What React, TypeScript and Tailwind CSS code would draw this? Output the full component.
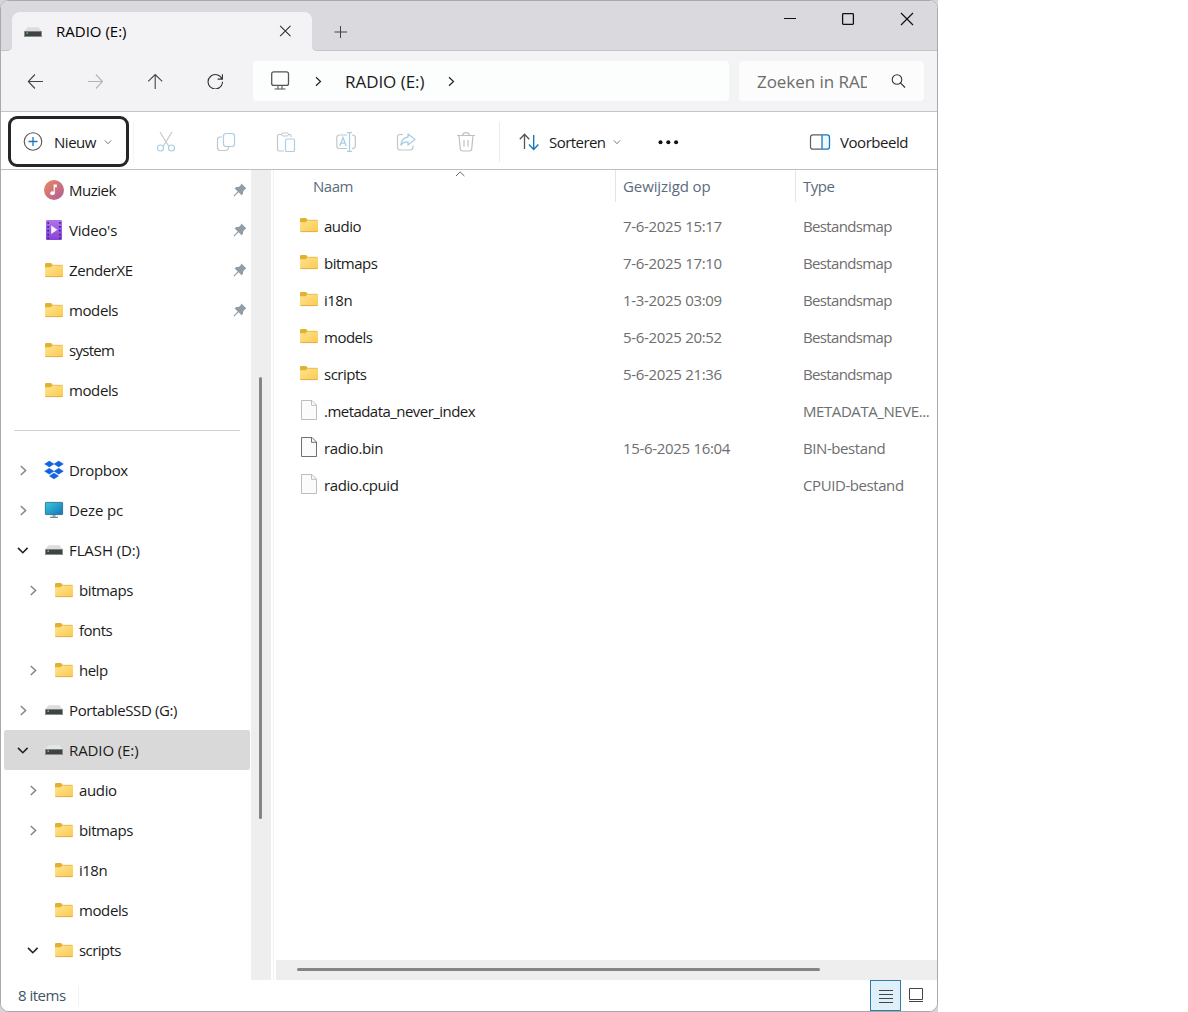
import type { ReactNode } from "react";
import { clsx } from "clsx";

type IconKind = "music" | "video" | "folder" | "dropbox" | "pc" | "drive";

interface TreeItem {
  label: string;
  icon: IconKind;
  level?: number;
  state?: "open" | "closed";
  pinned?: boolean;
  selected?: boolean;
  tracking?: string;
}

interface FileRow {
  name: string;
  kind: "folder" | "file" | "hidden";
  date?: string;
  type: string;
}

const quickAccess: TreeItem[] = [
  { label: "Muziek", icon: "music", pinned: true },
  { label: "Video's", icon: "video", pinned: true, tracking: "tracking-[-0.25px]" },
  { label: "ZenderXE", icon: "folder", pinned: true, tracking: "tracking-[-0.4px]" },
  { label: "models", icon: "folder", pinned: true, tracking: "tracking-[-0.4px]" },
  { label: "system", icon: "folder", tracking: "tracking-[-0.7px]" },
  { label: "models", icon: "folder", tracking: "tracking-[-0.4px]" },
];

const tree: TreeItem[] = [
  { label: "Dropbox", icon: "dropbox", state: "closed", tracking: "tracking-[-0.35px]" },
  { label: "Deze pc", icon: "pc", state: "closed", tracking: "tracking-[-0.15px]" },
  { label: "FLASH (D:)", icon: "drive", state: "open", tracking: "tracking-[-0.1px]" },
  { label: "bitmaps", icon: "folder", level: 1, state: "closed", tracking: "tracking-[-0.4px]" },
  { label: "fonts", icon: "folder", level: 1 },
  { label: "help", icon: "folder", level: 1, state: "closed" },
  { label: "PortableSSD (G:)", icon: "drive", state: "closed", tracking: "tracking-[-0.38px]" },
  { label: "RADIO (E:)", icon: "drive", state: "open", selected: true, tracking: "tracking-[-0.1px]" },
  { label: "audio", icon: "folder", level: 1, state: "closed", tracking: "tracking-[-0.35px]" },
  { label: "bitmaps", icon: "folder", level: 1, state: "closed", tracking: "tracking-[-0.4px]" },
  { label: "i18n", icon: "folder", level: 1 },
  { label: "models", icon: "folder", level: 1, tracking: "tracking-[-0.4px]" },
  { label: "scripts", icon: "folder", level: 1, state: "open", tracking: "tracking-[-0.6px]" },
];

const files: FileRow[] = [
  { name: "audio", kind: "folder", date: "7-6-2025 15:17", type: "Bestandsmap" },
  { name: "bitmaps", kind: "folder", date: "7-6-2025 17:10", type: "Bestandsmap" },
  { name: "i18n", kind: "folder", date: "1-3-2025 03:09", type: "Bestandsmap" },
  { name: "models", kind: "folder", date: "5-6-2025 20:52", type: "Bestandsmap" },
  { name: "scripts", kind: "folder", date: "5-6-2025 21:36", type: "Bestandsmap" },
  { name: ".metadata_never_index", kind: "hidden", type: "METADATA_NEVE..." },
  { name: "radio.bin", kind: "file", date: "15-6-2025 16:04", type: "BIN-bestand" },
  { name: "radio.cpuid", kind: "hidden", type: "CPUID-bestand" },
];

function Svg({ w, h, className, children }: { w: number; h: number; className?: string; children: ReactNode }) {
  return (
    <svg width={w} height={h} viewBox={`0 0 ${w} ${h}`} fill="none" className={clsx("shrink-0", className)}>
      {children}
    </svg>
  );
}

function FolderIcon() {
  return (
    <Svg w={20} h={20}>
      <path d="M1 4.2Q1 3 2.2 3H7l2.2 2.2L7 8H1Z" fill="#e3b130" />
      <path d="M1 7.2H6.6L9 5H18q1 0 1 1V16q0 1-1 1H2q-1 0-1-1Z" fill="url(#folder)" />
      <path d="M1.5 16.6H18.5" stroke="#dfa94a" strokeWidth="0.9" />
      <path d="M9 5.3H18.5" stroke="#e2b64c" strokeWidth="0.8" />
    </Svg>
  );
}

function DriveIcon({ selected }: { selected?: boolean }) {
  return (
    <Svg w={20} h={20}>
      <path d="M4.5 5.2H15.5L19 9.5H1Z" fill={selected ? "#e6e6e6" : "#dcdddd"} />
      <rect x="1" y="9" width="18" height="6" rx="0.5" fill="#8b8d8d" />
      <rect x="2" y="9.8" width="16" height="4.2" fill="#3f4343" />
      <rect x="3.5" y="10.4" width="1.5" height="1.5" fill="#6fd05f" />
    </Svg>
  );
}

function FileIcon({ faded }: { faded: boolean }) {
  const stroke = faded ? "#bdbdbd" : "#6f6f6f";
  return (
    <Svg w={18} h={20}>
      <path d="M1.5.5H12L16.5 5V19.5H1.5Z" fill="#fbfbfb" stroke={stroke} />
      <path d="M11.5.8V5.3H16.3" stroke={stroke} />
    </Svg>
  );
}

function TreeIcon({ kind, selected }: { kind: IconKind; selected?: boolean }) {
  if (kind === "folder") return <FolderIcon />;
  if (kind === "drive") return <DriveIcon selected={selected} />;
  if (kind === "music")
    return (
      <Svg w={20} h={20}>
        <circle cx="10" cy="10" r="10" fill="url(#music)" />
        <ellipse cx="8.4" cy="13.2" rx="2.2" ry="1.9" fill="#fff" />
        <path d="M9.6 4.5h3.2v2.7h-2v6H9.6Z" fill="#fff" />
      </Svg>
    );
  if (kind === "video")
    return (
      <Svg w={20} h={20}>
        <rect x="2" width="16" height="20" rx="1.2" fill="url(#video)" />
        <path d="M4.2 2V19M15.9 2V19" stroke="#4c2389" strokeWidth="1.8" strokeDasharray="1.8 2.1" />
        <path d="M7.2 5.5L13.4 9.8L7.2 14Z" fill="#f5effb" />
      </Svg>
    );
  if (kind === "dropbox")
    return (
      <Svg w={20} h={20}>
        <path
          d="M5.3 1L10 4 5.3 7 .6 4ZM14.7 1L19.4 4 14.7 7 10 4ZM5.3 8.2L10 11.2 5.3 14.2 .6 11.2ZM14.7 8.2L19.4 11.2 14.7 14.2 10 11.2ZM10 13L14.6 16 10 19 5.4 16Z"
          fill="#1263e0"
          stroke="#1263e0"
          strokeWidth="0.4"
        />
      </Svg>
    );
  return (
    <Svg w={20} h={20}>
      <path d="M8.5 14h3v3h-3z" fill="#a9b4ba" />
      <path d="M6 17.3h8" stroke="#586f7b" />
      <rect x="1.4" y="2.4" width="17.2" height="12.2" rx="0.5" fill="url(#pc)" stroke="#20647e" strokeWidth="0.8" />
    </Svg>
  );
}

function PinIcon() {
  return (
    <Svg w={14} h={14}>
      <path
        d="M8.4.6L13.4 5.6 12 6.2 10.2 8.4 9.9 11 8.6 12.3 5.6 9.3 1.2 13.4.5 12.8 4.7 8.4 1.7 5.4 3 4.1 5.8 4 7.8 2Z"
        fill="#929ca4"
      />
    </Svg>
  );
}

function TreeRow({ item }: { item: TreeItem }) {
  return (
    <div
      className={clsx(
        "mr-px ml-[3px] flex h-10 shrink-0 items-center rounded-[2px]",
        item.level ? "pl-[19px]" : "pl-[9px]",
        item.selected && "bg-[#d9d9d9]"
      )}
    >
      <div className="mr-[11px] flex w-5 justify-center">
        {item.state === "closed" && (
          <Svg w={8} h={12}>
            <path d="M1.8 2L6.6 6.5 1.8 11" stroke="#858585" strokeWidth="1.5" />
          </Svg>
        )}
        {item.state === "open" && (
          <Svg w={12} h={8}>
            <path d="M1 1.9L5.8 6.7 10.6 1.9" stroke="#222" strokeWidth="1.6" />
          </Svg>
        )}
      </div>
      <TreeIcon kind={item.icon} selected={item.selected} />
      <span className={clsx("ml-[5px] flex-1 whitespace-pre text-[#1b1b1b]", item.tracking)}>{item.label}</span>
      {item.pinned && (
        <div className="mr-[3px]">
          <PinIcon />
        </div>
      )}
    </div>
  );
}

function TitleBar() {
  return (
    <div className="flex h-[50px] shrink-0 bg-[#f3f3f5]">
      <div className="w-[11px] rounded-br-[5px] border-b border-[#c4c4c9] bg-[#d9d9de]" />
      <div className="flex w-[300px] flex-col bg-linear-to-b from-[#d9d9de] from-80% to-[#f3f3f5] to-80% pt-[11px]">
        <div className="flex flex-1 items-center rounded-t-lg bg-[#f3f3f5] pr-[19px] pl-[11px]">
          <DriveIcon />
          <span className="ml-[13px] flex-1 text-black tracking-[0px]">RADIO (E:)</span>
          <Svg w={16} h={16}>
            <path d="M3.1 1.8L13.5 12.2M13.5 1.8L3.1 12.2" stroke="#333" strokeWidth="1.1" />
          </Svg>
        </div>
      </div>
      <div className="flex flex-1 justify-between rounded-bl-[5px] border-b border-[#c4c4c9] bg-[#d9d9de]">
        <Svg w={14} h={14} className="mt-[24px] ml-[22px]">
          <path d="M6.5 1V13M.5 7H13" stroke="#444" />
        </Svg>
        <div className="mt-[9px] mr-[21px] flex gap-[40px]">
          <Svg w={18} h={18}>
            <path d="M3 8.5H15" stroke="#111" strokeWidth="1.1" />
          </Svg>
          <Svg w={18} h={18}>
            <rect x="3.6" y="3.6" width="10.8" height="10.8" rx="0.8" stroke="#111" strokeWidth="1.3" />
          </Svg>
          <Svg w={18} h={18} className="ml-px">
            <path d="M3 3L15 15M15 3L3 15" stroke="#111" strokeWidth="1.2" />
          </Svg>
        </div>
      </div>
    </div>
  );
}

function NavButton({ children }: { children: ReactNode }) {
  return <button className="flex w-[60px] justify-center">{children}</button>;
}

function NavBar() {
  return (
    <div className="flex h-[61px] shrink-0 items-center border-b border-[#c2c3c6] bg-[#f3f3f5] pl-[4px]">
      <NavButton>
        <Svg w={16} h={16}>
          <path d="M7.9 1.5L1.3 8.5 7.9 15.5M1.4 8.5H16" stroke="#444" strokeWidth="1.1" />
        </Svg>
      </NavButton>
      <NavButton>
        <Svg w={16} h={16}>
          <path d="M8.9 1.5L15.5 8.5 8.9 15.5M15.4 8.5H.9" stroke="#b3b3b5" strokeWidth="1.1" />
        </Svg>
      </NavButton>
      <NavButton>
        <Svg w={16} h={16}>
          <path d="M1.2 8.3L8.2 1.5 15.2 8.3M8.2 1.5V16" stroke="#444" strokeWidth="1.1" />
        </Svg>
      </NavButton>
      <NavButton>
        <Svg w={16} h={16}>
          <path d="M15.1 6.4A7.2 7.2 0 1 0 15.5 8.8M15.4 1.2V6.1H10.6" stroke="#333" strokeWidth="1.1" />
        </Svg>
      </NavButton>
      <div className="ml-[8px] flex h-10 w-[476px] items-center rounded bg-[#fcfdfd] text-[17px] text-[#1b1b1b]">
        <Svg w={20} h={20} className="ml-[17px]">
          <rect x="1.7" y=".8" width="16.8" height="13.6" rx="2" stroke="#555" strokeWidth="1.3" />
          <path d="M8 14.6V17.6M12 14.6V17.6M4.5 18H15.5" stroke="#555" strokeWidth="1.1" />
        </Svg>
        <Svg w={8} h={12} className="ml-[24px]">
          <path d="M2 2.3L6.5 6.5 2 10.7" stroke="#222" strokeWidth="1.2" />
        </Svg>
        <span className="mt-[2px] ml-[23px] w-[81px] tracking-[-0.05px] whitespace-pre">RADIO (E:)</span>
        <Svg w={8} h={12} className="ml-[21px]">
          <path d="M2 2.3L6.5 6.5 2 10.7" stroke="#222" strokeWidth="1.2" />
        </Svg>
      </div>
      <div className="ml-[10px] flex h-10 w-[185px] items-center rounded bg-[#fcfcfd] text-[17px] text-[#6b6b6b]">
        <span className="mt-[2px] ml-[18px] w-[110px] overflow-hidden tracking-[-0.05px] whitespace-nowrap">Zoeken in RADIO (E:)</span>
        <Svg w={16} h={16} className="ml-[24px]">
          <circle cx="6" cy="6.5" r="4.8" stroke="#333" strokeWidth="1.1" />
          <path d="M9.4 9.9L14 14.5" stroke="#333" strokeWidth="1.2" />
        </Svg>
      </div>
    </div>
  );
}

function ToolIcon({ children }: { children: ReactNode }) {
  return (
    <button disabled className="flex w-[60px] justify-center">
      <Svg w={20} h={20}>{children}</Svg>
    </button>
  );
}

function SmallChevron() {
  return (
    <Svg w={8} h={6}>
      <path d="M.8 1.4L4 4.7 7.2 1.4" stroke="#777" strokeWidth="1" />
    </Svg>
  );
}

// Disabled icons use two tones: grey body, light blue accent
function Toolbar() {
  return (
    <div className="flex h-[58px] shrink-0 items-center border-b border-[#bfbfbf] bg-white pt-[2px] text-[#1b1b1b]">
      <button className="ml-[7px] flex h-[51px] w-[121px] items-center rounded-[9px] border-[3px] border-[#26262a] pl-[12px]">
        <Svg w={20} h={20}>
          <circle cx="10" cy="9.5" r="8.8" stroke="#555" strokeWidth="1.1" />
          <path d="M10 5V14M5.5 9.5H14.5" stroke="#1878b9" strokeWidth="1.3" />
        </Svg>
        <span className="mt-[2px] mr-[8px] ml-[11px] w-[42px] tracking-[-0.5px]">Nieuw</span>
        <SmallChevron />
      </button>
      <div className="ml-[4px] h-[40px] w-px bg-[#f4f4f4]" />
      <div className="ml-[2px] flex">
        <ToolIcon>
          <path d="M4 0L12.6 14M16 0L7.4 14" stroke="#c3c5c6" strokeWidth="1.1" />
          <circle cx="4.5" cy="16" r="3" stroke="#a8cfe5" strokeWidth="1.2" />
          <circle cx="15.5" cy="16" r="3" stroke="#a8cfe5" strokeWidth="1.2" />
        </ToolIcon>
        <ToolIcon>
          <path d="M6 5H4Q1.5 5 1.5 7.5V15.5Q1.5 18.5 4 18.5H9.5Q12.5 18.5 12.5 15" stroke="#c3c5c6" strokeWidth="1.2" />
          <rect x="7.5" y="1.5" width="11" height="13" rx="2.5" stroke="#a8cfe5" strokeWidth="1.2" />
        </ToolIcon>
        <ToolIcon>
          <path d="M6 2.5H3Q1.5 2.5 1.5 4V17.5Q1.5 19 3 19H8M12 2.5H14Q15 2.5 15 4V5" stroke="#c3c5c6" strokeWidth="1.2" />
          <rect x="5.5" y="1" width="7" height="3" rx="1.5" stroke="#c3c5c6" />
          <rect x="9.5" y="7" width="9" height="12.5" rx="1.5" stroke="#a8cfe5" strokeWidth="1.2" />
        </ToolIcon>
        <ToolIcon>
          <path d="M11 3H3.5Q.8 3 .8 5.5V14Q.8 16.5 3.5 16.5H11M16 3Q19.3 3 19.3 5.5V14Q19.3 16.5 16 16.5" stroke="#c3c5c6" strokeWidth="1.2" />
          <path d="M3.8 14L7 5.5 10.2 14M5 11.2H9M13.5 1V19M11 .7H16M11 19.3H16" stroke="#a8cfe5" strokeWidth="1.3" />
        </ToolIcon>
        <ToolIcon>
          <path d="M7 2.5H4Q1.5 2.5 1.5 5V15.5Q1.5 18 4 18H14Q17 18 17 15V13.5" stroke="#c3c5c6" strokeWidth="1.2" />
          <path d="M12 2L19 7.5 12 13V10Q7.5 9.5 4.8 13 5.5 6 12 5Z" stroke="#a8cfe5" strokeWidth="1.3" strokeLinejoin="round" />
        </ToolIcon>
        <ToolIcon>
          <path d="M1 3.5H19M6.5 3.5Q7 .7 10 .7T13.5 3.5M3 3.5L4.3 17Q4.5 19 6.5 19H13.5Q15.5 19 15.7 17L17 3.5M8 8V14.5M12 8V14.5" stroke="#bfc0c1" strokeWidth="1.2" />
        </ToolIcon>
      </div>
      <div className="ml-[3px] h-[40px] w-px bg-[#ececec]" />
      <Svg w={20} h={18} className="ml-[19px]">
        <path d="M.8 6.2L5.5 1.2 10.2 6.2M5.5 1.5V16" stroke="#555" strokeWidth="1.3" />
        <path d="M10 11.5L14.7 16.5 19.4 11.5M14.7 2V16.2" stroke="#1878b9" strokeWidth="1.4" />
      </Svg>
      <span className="mt-[2px] ml-[10px] w-[57px] tracking-[-0.55px]">Sorteren</span>
      <div className="ml-[7px]">
        <SmallChevron />
      </div>
      <Svg w={22} h={6} className="ml-[36px]">
        <circle cx="3.5" cy="3.3" r="2" fill="#111" />
        <circle cx="11.3" cy="3.3" r="2" fill="#111" />
        <circle cx="19.1" cy="3.3" r="2" fill="#111" />
      </Svg>
      <Svg w={22} h={16} className="ml-[130px]">
        <path d="M12.5.8H4Q1.5.8 1.5 3.3V12.7Q1.5 15.2 4 15.2H12.5" stroke="#5e5e5e" strokeWidth="1.2" />
        <path d="M13 .8H18Q20.5.8 20.5 3.3V12.7Q20.5 15.2 18 15.2H13Z" fill="#eef7fc" stroke="#1878b9" strokeWidth="1.3" />
      </Svg>
      <span className="mt-[2px] ml-[9px] tracking-[-0.45px]">Voorbeeld</span>
    </div>
  );
}

function FileList() {
  return (
    <div className="flex min-w-0 flex-1 flex-col">
      <div className="flex h-[32px] shrink-0 text-[#5b6b7d]">
        <div className="flex w-[340px] border-r border-[#e4e4e4] pl-[37px]">
          <span className="mt-[6px] w-[142px] leading-[21px]">Naam</span>
          <Svg w={10} h={6} className="mt-px">
            <path d="M1 5L5.2 .9 9.4 5" stroke="#666" />
          </Svg>
        </div>
        <div className="w-[180px] border-r border-[#e4e4e4] pt-[6px] pl-[7px] leading-[21px] tracking-[-0.1px]">Gewijzigd op</div>
        <div className="pt-[6px] pl-[7px] leading-[21px]">Type</div>
      </div>
      <div className="mt-[6px] flex-1">
        {files.map((file) => (
          <div key={file.name} className="flex h-[37px] items-center text-[#6e6e6e]">
            <div className="flex w-[347px] items-center pl-[23px]">
              <div className="mr-[5px] flex w-5 justify-center pb-[3px]">
                {file.kind === "folder" ? <FolderIcon /> : <FileIcon faded={file.kind === "hidden"} />}
              </div>
              <span
                className={clsx(
                  "text-[#1b1b1b]",
                  file.name.startsWith("radio") && "tracking-[-0.4px]",
                  file.name.startsWith(".") && "tracking-[-0.54px]"
                )}
              >
                {file.name}
              </span>
            </div>
            <span className="w-[180px] tracking-[-0.32px]">{file.date}</span>
            <span className={clsx("whitespace-nowrap", file.kind === "folder" ? "tracking-[-0.65px]" : "tracking-[-0.42px]")}>
              {file.type}
            </span>
          </div>
        ))}
      </div>
      <div className="flex h-5 shrink-0 items-center bg-[#eeeeee] pb-px pl-[21px]">
        <div className="h-[3px] w-[523px] rounded-full bg-[#858585]" />
      </div>
    </div>
  );
}

function StatusBar() {
  return (
    <div className="flex h-[31px] shrink-0 items-center bg-white pl-[17px] text-[#3f5366]">
      <span>8 items</span>
      <div className="ml-3 h-5 w-px bg-[#f3f3f3]" />
      <div className="ml-auto flex h-[31px] w-[31px] items-center justify-center border border-[#2d7fa8] bg-[#dff0fa]">
        <Svg w={16} h={16}>
          <path d="M1 2.5H15M1 6.5H15M1 10.5H15M1 14.5H15" stroke="#444" />
        </Svg>
      </div>
      <Svg w={16} h={16} className="mr-[13px] mb-px ml-[7px]">
        <path d="M1.5 1.5H14.5V12.5H1.5ZM1 14.5H15" stroke="#444" />
      </Svg>
    </div>
  );
}

export default function App() {
  return (
    <div className="h-[1012px] w-[1188px] overflow-hidden bg-white font-['Open_Sans',sans-serif] text-[15px] tracking-[-0.5px]">
      <svg width="0" height="0" className="absolute">
        <defs>
          <linearGradient id="folder" x1="0" y1="0" x2="1" y2="1">
            <stop stopColor="#fee394" />
            <stop offset="1" stopColor="#fbcb4e" />
          </linearGradient>
          <linearGradient id="music" x1="0" y1="0" x2="1" y2="1">
            <stop stopColor="#ee895b" />
            <stop offset="1" stopColor="#ad5b9d" />
          </linearGradient>
          <linearGradient id="video" x1="0" y1="0" x2="0" y2="1">
            <stop stopColor="#ae75ea" />
            <stop offset="1" stopColor="#8743d8" />
          </linearGradient>
          <linearGradient id="pc" x1="0" y1="0" x2="1" y2="1">
            <stop stopColor="#38cbd9" />
            <stop offset="1" stopColor="#1473bb" />
          </linearGradient>
        </defs>
      </svg>
      <div className="h-full w-[938px] bg-[#d5d5d7]">
        <div className="flex h-full flex-col overflow-hidden rounded-[9px] border border-[#a9a9ac] bg-white">
          <TitleBar />
          <NavBar />
          <Toolbar />
          <div className="flex min-h-0 flex-1">
            <div className="flex w-[250px] shrink-0 flex-col overflow-hidden">
              {quickAccess.map((item, i) => (
                <TreeRow key={i} item={item} />
              ))}
              <div className="mr-[11px] ml-[13px] flex h-10 shrink-0 items-center">
                <div className="h-px flex-1 bg-[#d3d3d3]" />
              </div>
              {tree.map((item, i) => (
                <TreeRow key={i} item={item} />
              ))}
            </div>
            <div className="flex w-5 shrink-0 bg-[#eeeeee] pt-[207px] pl-[8px]">
              <div className="h-[442px] w-[3px] rounded-full bg-[#858585]" />
            </div>
            <div className="mr-[2px] ml-[2px] w-px bg-[#f3f3f3]" />
            <FileList />
          </div>
          <StatusBar />
        </div>
      </div>
    </div>
  );
}
